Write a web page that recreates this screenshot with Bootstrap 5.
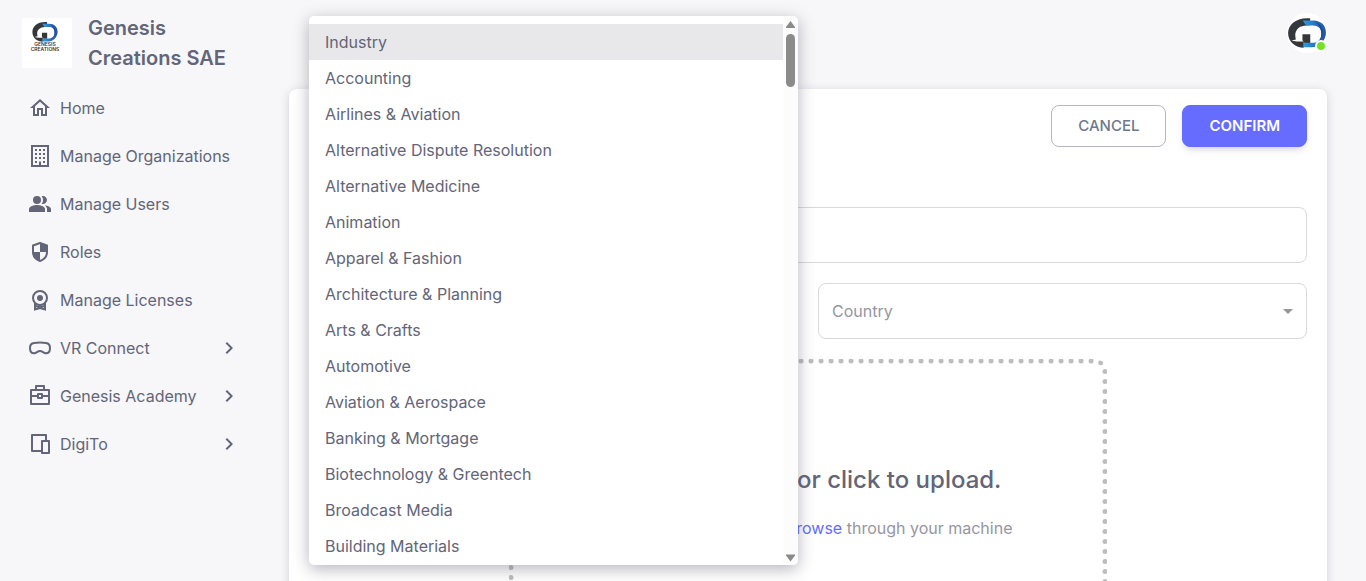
<!DOCTYPE html>
<html lang="en">
<head>
<meta charset="utf-8">
<meta name="viewport" content="width=device-width, initial-scale=1">
<title>Genesis Creations SAE</title>
<link href="https://cdn.jsdelivr.net/npm/bootstrap@5.3.0/dist/css/bootstrap.min.css" rel="stylesheet">
<style>
  body { font-family: Inter, "Liberation Sans", sans-serif; font-size: 16px; line-height: 24px; color: #636578; background: #f7f7f9; }
  .app-sidebar { width: 260px; }
  .brand { padding: 13px 22px 11px; }
  .brand-logo { width: 50px; height: 50px; background: #fff; }
  .brand-name { font-size: 20px; line-height: 30px; font-weight: 600; color: #636578; }
  .side-link { height: 48px; padding: 0 19px 0 28px; color: #636578; gap: 8px; }
  .side-link svg { width: 24px; height: 24px; flex: none; }
  .app-main { padding: 13px 39px 0 29px; }
  .avatar { width: 40px; height: 40px; background: #fff; }
  .avatar-dot { width: 12px; height: 12px; right: 0; bottom: 1px; background: #72e128; border: 2px solid #fff; }
  .panel { margin-top: 36px; padding: 16px 20px; min-height: 640px; background: #fff; border-radius: 8px; box-shadow: 0 2px 10px rgba(76,78,100,.22); }
  .act { height: 42px; padding: 0 26px; font-size: 15px; font-weight: 500; border-radius: 8px; }
  .act-cancel { color: #6d788d; border-color: #b4b6c4; }
  .act-confirm { color: #fff; background: #666cff; border-color: #666cff; font-weight: 600; box-shadow: 0 4px 8px -4px rgba(76,78,100,.42); }
  .fields { margin-top: 60px; --bs-gutter-x: 20px; --bs-gutter-y: 20px; }
  .field { height: 56px; padding: 0 13px; font-size: 16px; color: #9596a2; background: #fff none; border: 1px solid #d8d8dd; border-radius: 8px; }
  .field-caret { right: 7px; top: 16px; width: 24px; height: 24px; fill: #9596a2; pointer-events: none; }
  .menu { left: 10px; right: 10px; top: -267px; height: calc(100vh - 32px); background: #fff; border-radius: 5px; z-index: 5; box-shadow: 0 4px 16px rgba(76,78,100,.42); }
  .menu-list { padding: 8px 0; }
  .menu-list li { height: 36px; padding: 6px 16px; white-space: nowrap; }
  .menu-list .picked { background: #e8e8ea; }
  .menu-bar { width: 15px; background: #fcfcfc; padding: 4px 0 3px; border-radius: 0 5px 5px 0; }
  .menu-bar svg { width: 9px; height: 8px; fill: #8b8b8b; }
  .menu-thumb { width: 9px; height: 53px; margin-top: 6px; border-radius: 5px; background: #8b8b8b; }
  .dropzone { width: 60%; height: 300px; margin-top: 20px; padding: 100px 0 0 8px; border: 5px dotted #bdbdbd; border-radius: 12px; }
  .dropzone h2 { font-size: 24px; line-height: 32px; font-weight: 500; margin: 0 0 20px; }
  .dropzone p { color: #9596a2; }
  .dropzone a { color: #666cff; }
</style>
</head>
<body>
<svg class="position-absolute" width="0" height="0" aria-hidden="true">
  <defs>
    <linearGradient id="blue" x1="0" x2="1"><stop offset="0" stop-color="#2ba0e4"/><stop offset=".5" stop-color="#2b75c4"/><stop offset="1" stop-color="#26509e"/></linearGradient>
    <symbol id="mark-gc" viewBox="0 0 116 92">
      <path fill="#35373b" d="M68 1C25-3 0 20 0 46c0 28 24 45 48 45V72H26l-16-3 14-3c-1-4-2-8-2-13 0-14 9-27 28-29l16-2zM44 68V50h24v27H50z"/>
      <path fill="url(#blue)" d="M45 8h32c24 0 39 15 39 37S98 90 72 90H48V76h26c18 0 28-12 28-28S92 23 76 23H55z"/>
      <path fill="#17478f" d="M79 8c18 8 27 20 27 37 0 15-7 26-20 33 11-6 16-16 16-30C102 29 92 17 79 8z"/>
    </symbol>
  </defs>
</svg>
<div class="d-flex vh-100 overflow-hidden">
  <aside class="app-sidebar flex-shrink-0">
    <div class="brand d-flex align-items-center gap-3">
      <svg class="brand-logo flex-shrink-0" viewBox="0 0 50 50" role="img" aria-label="Genesis Creations">
        <use href="#mark-gc" x="10" y="4" width="26" height="20"/>
        <g fill="#35373b" font-family="Inter, sans-serif" font-weight="600" text-anchor="middle"><text x="23" y="28" font-size="5">GENESIS</text><text x="23" y="33" font-size="5">CREATIONS</text></g>
      </svg>
      <div class="brand-name">Genesis Creations SAE</div>
    </div>
    <nav aria-label="Main">
      <a class="side-link d-flex align-items-center text-decoration-none" href="#"><svg viewBox="0 0 24 24" fill="currentColor"><path d="M12 5.69l5 4.5V18h-2v-6H9v6H7v-7.81l5-4.5M12 3L2 12h3v8h6v-6h2v6h6v-8h3L12 3z"/></svg><span>Home</span></a>
      <a class="side-link d-flex align-items-center text-decoration-none" href="#"><svg viewBox="0 0 24 24" fill="currentColor"><path d="M19 3V21H13V17.5H11V21H5V3H19M15 7H17V5H15V7M11 7H13V5H11V7M7 7H9V5H7V7M15 11H17V9H15V11M11 11H13V9H11V11M7 11H9V9H7V11M15 15H17V13H15V15M11 15H13V13H11V15M7 15H9V13H7V15M15 19H17V17H15V19M7 19H9V17H7V19M21 1H3V23H21V1Z"/></svg><span>Manage Organizations</span></a>
      <a class="side-link d-flex align-items-center text-decoration-none" href="#"><svg viewBox="0 0 24 24" fill="currentColor"><path d="M16.67 13.13C18.04 14.06 19 15.32 19 17v3h4v-3c0-2.18-3.57-3.47-6.33-3.87zM15 12c2.21 0 4-1.79 4-4s-1.79-4-4-4c-.47 0-.91.1-1.33.24C14.5 5.27 15 6.58 15 8s-.5 2.73-1.33 3.76c.42.14.86.24 1.33.24z"/><circle cx="9" cy="8" r="4"/><path d="M9 13c-2.67 0-8 1.34-8 4v3h16v-3c0-2.66-5.33-4-8-4z"/></svg><span>Manage Users</span></a>
      <a class="side-link d-flex align-items-center text-decoration-none" href="#"><svg viewBox="0 0 24 24"><path d="M12 3 19 5.500V12c0 4-3 7.500-7 9-4-1.500-7-5-7-9V5.500z" fill="none" stroke="currentColor" stroke-width="2" stroke-linejoin="round"/><path d="M12 3l7 2.500V12h-7zM12 12v9c-4-1.500-7-5-7-9z" fill="currentColor"/></svg><span>Roles</span></a>
      <a class="side-link d-flex align-items-center text-decoration-none" href="#"><svg viewBox="0 0 24 24" fill="none" stroke="currentColor" stroke-width="2"><circle cx="12" cy="10" r="7"/><circle cx="12" cy="10" r="3" fill="currentColor" stroke="none"/><path d="M7 15v6.500l5-1.500 5 1.500V15M7 18c3 .7 7 .7 10 0"/></svg><span>Manage Licenses</span></a>
      <a class="side-link d-flex align-items-center text-decoration-none" href="#"><svg viewBox="0 0 24 24" fill="none" stroke="currentColor" stroke-width="2"><path d="M6 7C9 6.600 15 6.600 18 7c2.500.3 4 2.200 4 5s-1.300 5.300-4 5.300c-2.500 0-3.500-2.300-6-2.300s-3.500 2.300-6 2.300c-2.700 0-4-2.500-4-5.300s1.500-4.700 4-5z"/></svg><span class="flex-grow-1">VR Connect</span><svg viewBox="0 0 24 24" fill="currentColor"><path d="M8.590 16.580 13.170 12 8.590 7.410 10 6l6 6-6 6z"/></svg></a>
      <a class="side-link d-flex align-items-center text-decoration-none" href="#"><svg viewBox="0 0 24 24" fill="none" stroke="currentColor" stroke-width="2" stroke-linejoin="round"><path d="M3 6h18v14H3zM8 6V2h8v4M3 12h7M14 12h7M10 10h4v4h-4z"/></svg><span class="flex-grow-1">Genesis Academy</span><svg viewBox="0 0 24 24" fill="currentColor"><path d="M8.590 16.580 13.170 12 8.590 7.410 10 6l6 6-6 6z"/></svg></a>
      <a class="side-link d-flex align-items-center text-decoration-none" href="#"><svg viewBox="0 0 24 24" fill="none" stroke="currentColor" stroke-width="2" stroke-linejoin="round"><path d="M18 8V3H4v16h9M14 9h7v12h-7z"/></svg><span class="flex-grow-1">DigiTo</span><svg viewBox="0 0 24 24" fill="currentColor"><path d="M8.590 16.580 13.170 12 8.590 7.410 10 6l6 6-6 6z"/></svg></a>
    </nav>
  </aside>
  <main class="app-main flex-grow-1">
    <header class="d-flex justify-content-end">
      <div class="avatar rounded-circle position-relative d-flex align-items-center justify-content-center">
        <svg width="38" height="30" role="img" aria-label="Account"><use href="#mark-gc"/></svg>
        <span class="avatar-dot rounded-circle position-absolute"></span>
      </div>
    </header>
    <form class="panel">
      <div class="d-flex justify-content-end gap-3">
        <button type="button" class="btn act act-cancel">CANCEL</button>
        <button type="button" class="btn act act-confirm">CONFIRM</button>
      </div>
      <div class="row fields">
        <div class="col-12 mt-0"><input type="text" class="form-control field" aria-label="Name"></div>
        <div class="col-6 position-relative">
          <div class="field"></div>
          <div class="menu position-absolute d-flex">
            <ul class="menu-list list-unstyled m-0 flex-grow-1 overflow-hidden" role="listbox" aria-label="Industry">
              <li class="picked" role="option" aria-selected="true">Industry</li>
              <li role="option">Accounting</li>
              <li role="option">Airlines &amp; Aviation</li>
              <li role="option">Alternative Dispute Resolution</li>
              <li role="option">Alternative Medicine</li>
              <li role="option">Animation</li>
              <li role="option">Apparel &amp; Fashion</li>
              <li role="option">Architecture &amp; Planning</li>
              <li role="option">Arts &amp; Crafts</li>
              <li role="option">Automotive</li>
              <li role="option">Aviation &amp; Aerospace</li>
              <li role="option">Banking &amp; Mortgage</li>
              <li role="option">Biotechnology &amp; Greentech</li>
              <li role="option">Broadcast Media</li>
              <li role="option">Building Materials</li>
            </ul>
            <div class="menu-bar d-flex flex-column align-items-center" aria-hidden="true">
              <svg viewBox="0 0 9 8"><path d="M4.500 1 9 7v1H0V7z"/></svg>
              <div class="menu-thumb"></div>
              <svg class="mt-auto" viewBox="0 0 9 8"><path d="M4.500 7.500 0 1.500V.5h9v1z"/></svg>
            </div>
          </div>
        </div>
        <div class="col-6">
          <div class="position-relative">
            <select class="form-select field" aria-label="Country"><option>Country</option></select>
            <svg class="field-caret position-absolute" viewBox="0 0 24 24"><path d="M7 10l5 5 5-5z"/></svg>
          </div>
        </div>
      </div>
      <div class="dropzone mx-auto text-center">
        <h2>Drop files here or click to upload.</h2>
        <p>Drop files here or click <a href="#" class="text-decoration-none">browse</a> through your machine</p>
      </div>
    </form>
  </main>
</div>
<script src="https://cdn.jsdelivr.net/npm/bootstrap@5.3.0/dist/js/bootstrap.bundle.min.js"></script>
</body>
</html>
